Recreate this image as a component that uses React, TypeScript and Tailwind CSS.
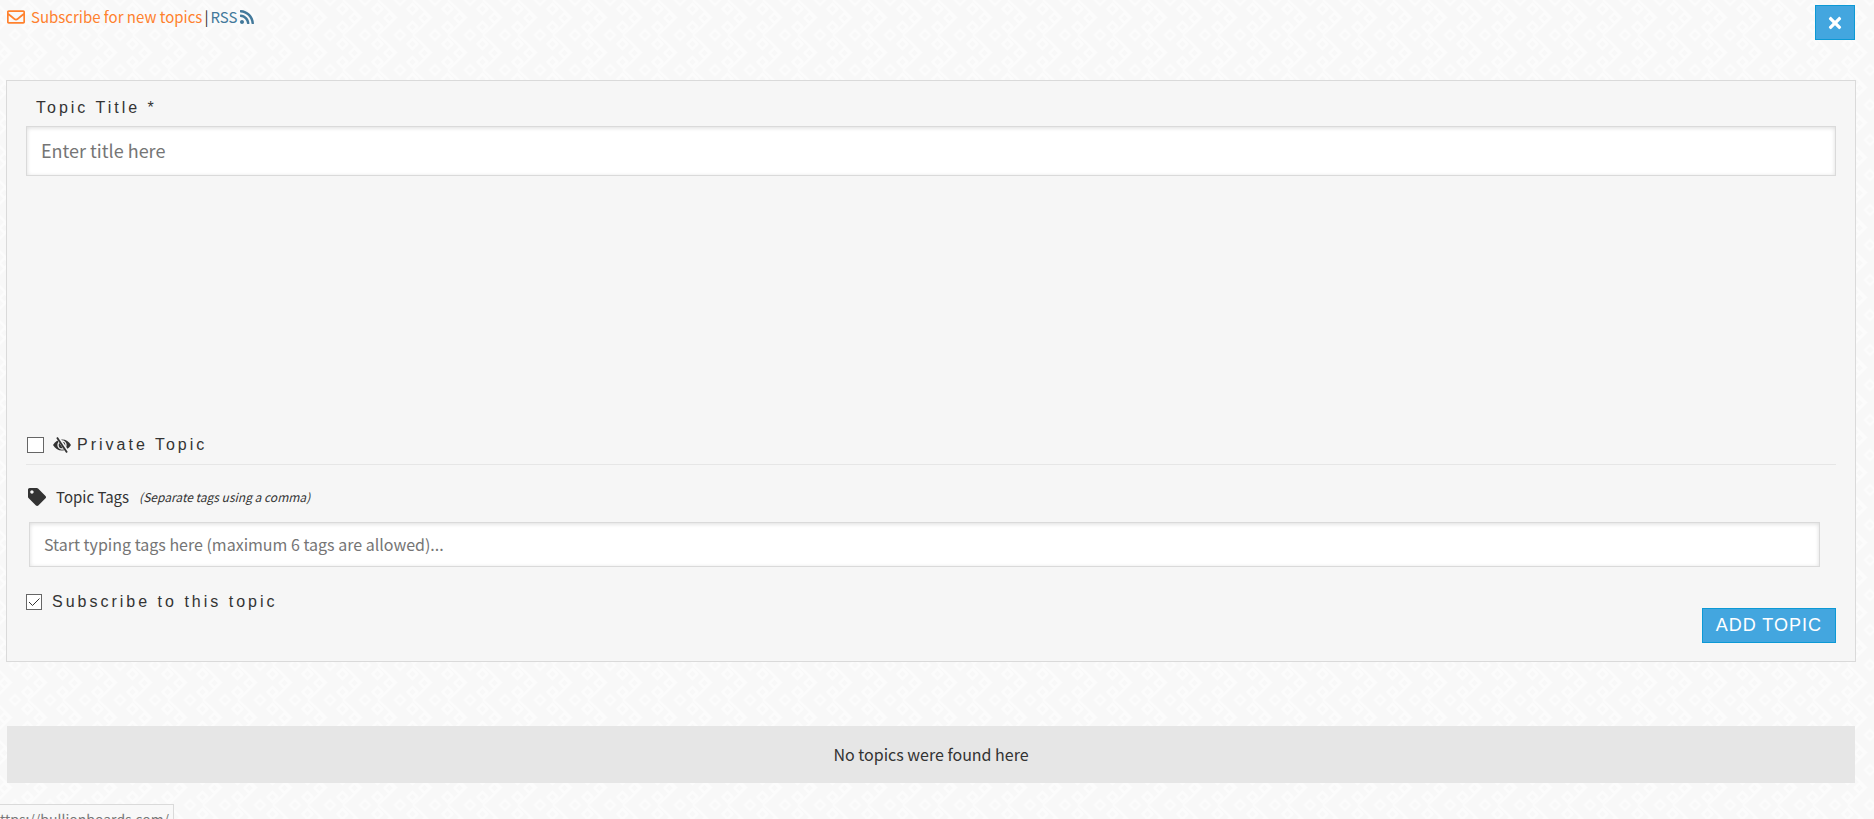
import { FaRegEnvelope, FaRss, FaTag, FaTimes } from "react-icons/fa";

const sans = "font-['Noto_Sans_CJK_SC','Open_Sans',sans-serif]";
const spaced = "font-['Liberation_Sans',Arial,sans-serif] text-base tracking-[3px] text-[#333333]";
const field = "block w-full border border-[#dadada] bg-white px-3.5 pb-0.5 shadow-[inset_0_1px_4px_rgba(0,0,0,0.14)] outline-none placeholder:text-[#757575]";

function Backdrop() {
  return (
    <svg className="absolute inset-0 -z-10 h-full w-full" aria-hidden="true">
      <defs>
        <pattern id="weave" width="35" height="35" patternUnits="userSpaceOnUse">
          <rect width="35" height="35" fill="#f8f8f8" />
          <g fill="none" stroke="#fcfcfc" strokeWidth="2.5">
            <path d="M15 -5l5 5-5 5-5-5zM15 30l5 5-5 5-5-5z" />
            <path d="M27.500 4l5 5-5 5-5-5zM27.500 22l5 5-5 5-5-5z" />
            <path d="M4.500 13l5 5-5 5-5-5zM39.500 13l5 5-5 5-5-5z" />
            <path d="M28 0l18 17.500L28 35M-7 0l18 17.500L-7 35" />
          </g>
        </pattern>
      </defs>
      <rect width="100%" height="100%" fill="url(#weave)" />
    </svg>
  );
}

function HiddenEye() {
  return (
    <svg viewBox="0 0 18 18" className="h-[18px] w-[18px]" aria-hidden="true">
      <path fill="currentColor" d="M0 9C2 5.500 5 3.500 9 3.500S16 5.500 18 9C16 12.500 13 14.500 9 14.500S2 12.500 0 9z" />
      <circle cx="9" cy="9" r="4" fill="none" stroke="#f6f6f6" strokeWidth="1.300" />
      <path d="M4.500 1L15.500 17.500" stroke="#f6f6f6" strokeWidth="3.600" />
      <path d="M4 1.500L14 16.500" stroke="currentColor" strokeWidth="1.800" />
    </svg>
  );
}

export default function App() {
  return (
    <main className={`${sans} relative isolate flex min-h-screen flex-col overflow-hidden text-[#333333]`}>
      <Backdrop />

      <header className="flex items-start justify-between pt-[5px] pr-[19px] pl-[7px]">
        <div className="flex items-center text-[15px] leading-6">
          <a href="#subscribe" className="flex items-center gap-1.5 text-[#ff812d]">
            <FaRegEnvelope className="h-[18px] w-[18px]" />
            Subscribe for new topics
          </a>
          <span className="px-0.5">|</span>
          <a href="#rss" className="flex items-center gap-0.5 text-[#43799b]">
            RSS
            <FaRss className="h-4 w-4" />
          </a>
        </div>
        <button
          type="button"
          aria-label="Close"
          className="flex h-[35px] w-10 items-center justify-center border border-[#0c99d5] bg-[#43a6df] text-white"
        >
          <FaTimes className="h-[18px] w-[18px]" />
        </button>
      </header>

      <form className="mt-10 mr-[18px] ml-1.5 border border-[#dadada] bg-[#f6f6f6] px-[19px] pt-[15px] pb-[18px]">
        <label htmlFor="title" className={`${spaced} block pl-2.5 leading-6`}>
          Topic Title *
        </label>
        <input id="title" type="text" placeholder="Enter title here" className={`${field} mt-1.5 h-[50px] text-[18px]`} />

        <div className="mt-[253px] flex h-9 items-center border-b border-[#e6e6e6] pb-1">
          <input
            id="private"
            type="checkbox"
            className="mr-[9px] ml-px h-4 w-[17px] appearance-none border border-[#666666] bg-white"
          />
          <label htmlFor="private" className={`${spaced} flex items-center gap-1.5`}>
            <HiddenEye />
            Private Topic
          </label>
        </div>

        <div className="mt-5 flex h-6 items-center pl-0.5">
          <FaTag className="h-[18px] w-[18px]" />
          <label htmlFor="tags" className="ml-2.5 text-[15px]">
            Topic Tags
          </label>
          <i className="ml-2.5 text-xs">(Separate tags using a comma)</i>
        </div>
        <div className="mt-[13px] mr-4 ml-[3px]">
          <input
            id="tags"
            type="text"
            placeholder="Start typing tags here (maximum 6 tags are allowed)..."
            className={`${field} h-[45px] text-base`}
          />
        </div>

        <div className="mt-[23px] flex h-6 items-center">
          <span className="mr-2.5 grid h-4 w-4">
            <input
              id="subscribe"
              type="checkbox"
              defaultChecked
              className="peer col-start-1 row-start-1 h-4 w-4 appearance-none border border-[#666666] bg-white"
            />
            <svg
              viewBox="0 0 16 16"
              className="pointer-events-none invisible col-start-1 row-start-1 h-4 w-4 peer-checked:visible"
              fill="none"
              stroke="#333333"
            >
              <path d="M3 8l3.500 3.500L13.500 4.500" />
            </svg>
          </span>
          <label htmlFor="subscribe" className={spaced}>
            Subscribe to this topic
          </label>
        </div>
        <div className="-mt-1.5 flex justify-end">
          <button
            type="submit"
            className="h-[35px] border border-[#0c99d5] bg-[#43a6df] px-[13px] font-['Liberation_Sans',Arial,sans-serif] text-[18px] tracking-[1px] text-white"
          >
            ADD TOPIC
          </button>
        </div>
      </form>

      <p className="mt-16 mr-[19px] ml-[7px] bg-[#e6e6e6] py-4 text-center text-base leading-[25px]">No topics were found here</p>

      <div className="absolute top-[804px] left-0 h-6 border border-l-0 border-[#dadada] bg-[#f8f8f8] pr-1 text-sm leading-7 text-[#777777]">
        ttps://bullionboards.com/
      </div>
    </main>
  );
}
